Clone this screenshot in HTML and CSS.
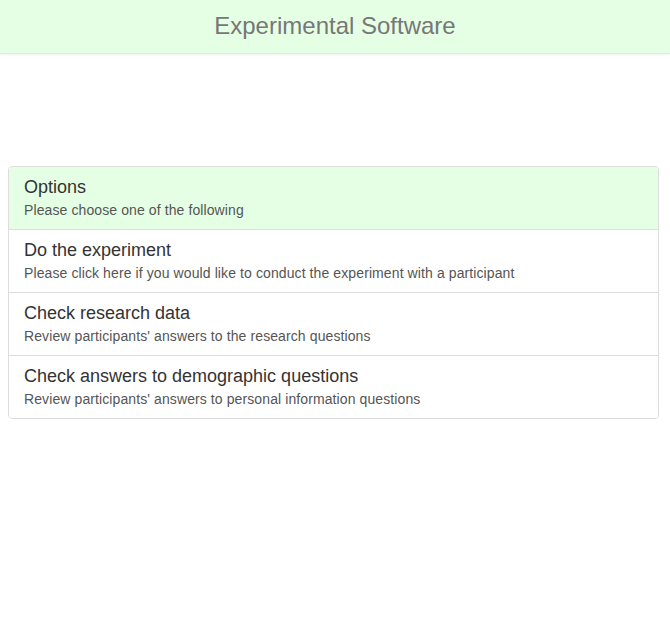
FILE: index.html
```html
<!DOCTYPE html>
<html>
<head>
<meta charset="utf-8">
<link rel="stylesheet" href="styles.css">
</head>
<body>
<header class="topbar">
  <h1 class="brand">Experimental Software</h1>
</header>
<main class="content">
  <div class="list-group">
    <div class="item active">
      <h4 class="item-title">Options</h4>
      <p class="item-text">Please choose one of the following</p>
    </div>
    <a class="item" href="#">
      <h4 class="item-title">Do the experiment</h4>
      <p class="item-text">Please click here if you would like to conduct the experiment with a participant</p>
    </a>
    <a class="item" href="#">
      <h4 class="item-title">Check research data</h4>
      <p class="item-text">Review participants' answers to the research questions</p>
    </a>
    <a class="item" href="#">
      <h4 class="item-title">Check answers to demographic questions</h4>
      <p class="item-text">Review participants' answers to personal information questions</p>
    </a>
  </div>
</main>
</body>
</html>
```
FILE: styles.css
```css
html, body {
  margin: 0;
  padding: 0;
  background: #fff;
  font-family: "Liberation Sans", Arial, sans-serif;
  color: #333;
}
.topbar {
  height: 54px;
  background: #e5ffe5;
  border-bottom: 1px solid #e3e8e3;
  box-shadow: 0 1px 2px rgba(0,0,0,0.06);
  display: flex;
  align-items: center;
  justify-content: center;
  box-sizing: border-box;
}
.brand {
  margin: 0;
  font-size: 24px;
  font-weight: normal;
  color: #777;
  line-height: 1;
  padding-bottom: 2px;
}
.content {
  padding: 112px 11px 0 8px;
}
.list-group {
  border: 1px solid #ddd;
  border-radius: 4px;
  overflow: hidden;
}
.item {
  display: block;
  padding: 10px 15px 9px;
  border-top: 1px solid #ddd;
  text-decoration: none;
  color: #333;
  background: #fff;
}
.item:first-child {
  border-top: 0;
}
.item.active {
  background: #e5ffe5;
}
.item-title {
  margin: 0;
  font-size: 18px;
  font-weight: normal;
  line-height: 20px;
  color: #333;
}
.item-text {
  margin: 3px 0 0;
  font-size: 14px;
  line-height: 20px;
  color: #555;
  letter-spacing: 0.1px;
}
```
